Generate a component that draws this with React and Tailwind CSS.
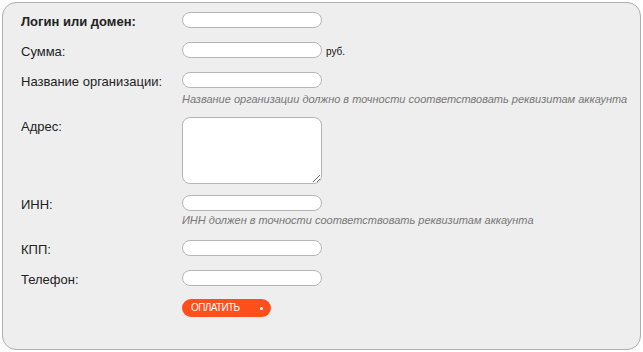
import React from "react";

const fieldCls =
  "block w-[140px] h-[16px] rounded-[8px] border border-[#b4b4b4] bg-white outline-none";

const Row = ({ label, bold, className = "", children }) => (
  <div className={`flex ${className}`}>
    <div
      className={`w-[161px] shrink-0 pt-[2px] text-[13px] leading-[16px] text-[#222] ${
        bold ? "font-bold" : ""
      }`}
    >
      {label}
    </div>
    <div className="flex-1">{children}</div>
  </div>
);

const Hint = ({ children, className = "" }) => (
  <div
    className={`whitespace-nowrap text-[11px] leading-[14px] italic text-[#777] ${className}`}
  >
    {children}
  </div>
);

export default function App() {
  return (
    <div
      className="w-[643px] h-[352px] bg-white p-[2px]"
      style={{ fontFamily: '"Liberation Sans", Arial, sans-serif' }}
    >
      <div className="h-[348px] rounded-[14px] border border-[#adadad] bg-[#eeeeee] pl-[18px] pt-[9px]">
        <Row label="Логин или домен:" bold>
          <input className={fieldCls} />
        </Row>

        <Row label="Сумма:" className="mt-[12px]">
          <div className="flex items-center h-[16px]">
            <input className={fieldCls} />
            <span className="ml-[4px] mt-[3px] text-[10px] leading-[10px] text-[#111]">
              руб.
            </span>
          </div>
        </Row>

        <Row label="Название организации:" className="mt-[12px]">
          <input className={fieldCls} />
          <Hint className="mt-[4px]">
            Название организации должно в точности соответствовать реквизитам аккаунта
          </Hint>
        </Row>

        <Row label="Адрес:" className="mt-[11px]">
          <textarea className="block w-[140px] h-[67px] rounded-[8px] border border-[#b4b4b4] bg-white outline-none" />
        </Row>

        <Row label="ИНН:" className="mt-[11px]">
          <input className={fieldCls} />
          <Hint className="mt-[2px]">
            ИНН должен в точности соответствовать реквизитам аккаунта
          </Hint>
        </Row>

        <Row label="КПП:" className="mt-[13px]">
          <input className={fieldCls} />
        </Row>

        <Row label="Телефон:" className="mt-[12px]">
          <input className={fieldCls} />
        </Row>

        <Row label="" className="mt-[11px]">
          <button className="flex items-center justify-between w-[89px] h-[18px] rounded-full bg-[#ff4f1a] pl-[9px] pr-[8px] text-[10px] tracking-[-0.6px] leading-none text-white">
            <span>ОПЛАТИТЬ</span>
            <span className="block w-[3px] h-[3px] rounded-full bg-white" />
          </button>
        </Row>
      </div>
    </div>
  );
}
